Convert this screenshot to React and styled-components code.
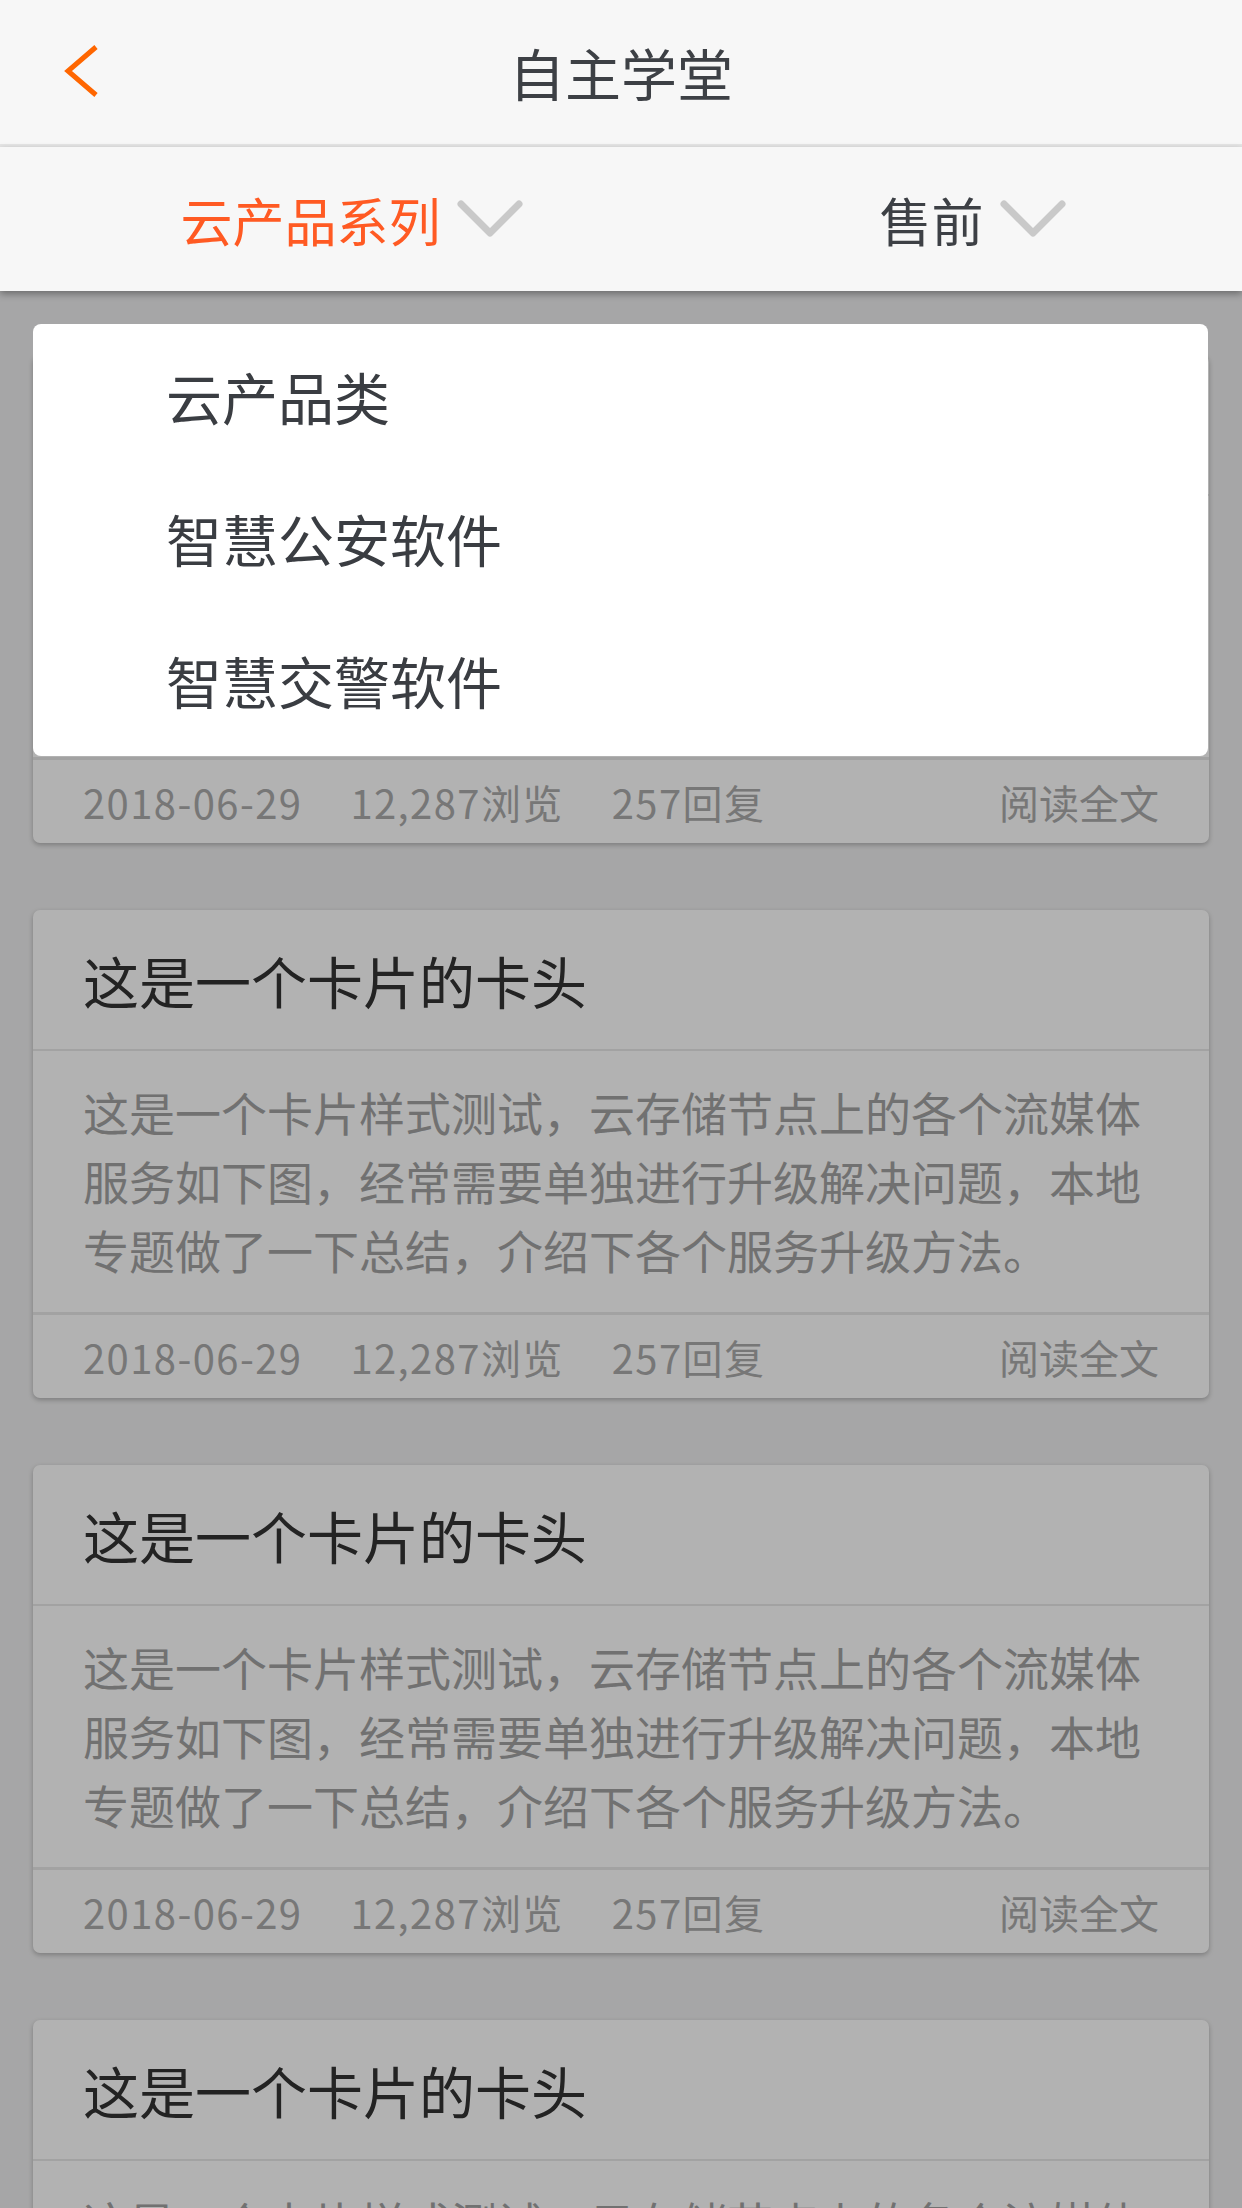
import React from 'react'
import styled, { createGlobalStyle } from 'styled-components'

const GlobalStyle = createGlobalStyle`
    body {
        margin: 0;
        background: #eeeeef;
        font-family: "Noto Sans CJK SC", "Noto Sans", sans-serif;
    }
`

const Page = styled.div`
    width: 1242px;
    min-height: 2208px;
    background: #eeeeef;
`

const Header = styled.header`
    display: grid;
    grid-template-columns: 1fr auto 1fr;
    align-items: center;
    height: 144px;
    background: #f7f7f7;
    border-bottom: 3px solid #e6e6e6;
`

const BackButton = styled.button`
    justify-self: start;
    display: flex;
    align-items: center;
    margin-left: 64px;
    padding: 0;
    border: none;
    background: none;
`

const Title = styled.h1`
    margin: 0 0 2px;
    font-size: 56px;
    font-weight: 400;
    color: #3d4045;
`

const TabBar = styled.nav`
    position: relative;
    z-index: 3;
    display: grid;
    grid-template-columns: 1fr 1fr;
    height: 144px;
    background: #f7f7f7;
    box-shadow: 0 3px 7px rgba(0, 0, 0, 0.35);
`

const Tab = styled.div`
    display: flex;
    align-items: center;
    justify-content: center;
    font-size: 52px;
    color: ${p => (p.active ? '#ff5a23' : '#3d4045')};
`

const Chevron = styled.svg`
    margin-left: 16px;
    margin-right: -82px;
    flex: none;
`

const Main = styled.main`
    position: relative;
`

const CardList = styled.div`
    display: flex;
    flex-direction: column;
    gap: 67px;
    padding: 64px 33px 64px 33px;
`

const Card = styled.article`
    background: #fff;
    border-radius: 7px;
    box-shadow: 0 2px 5px rgba(0, 0, 0, 0.25);
    overflow: hidden;
`

const CardHead = styled.div`
    display: flex;
    align-items: center;
    height: 139px;
    padding: 0 50px;
    font-size: 56px;
    color: #333;
    border-bottom: 2px solid #e8e8e8;
`

const CardBody = styled.div`
    padding: 26px 50px 28px;
    font-size: 46px;
    line-height: 69px;
    color: #a3a3a3;
    border-bottom: 3px solid #e8e8e8;
`

const CardFoot = styled.div`
    display: flex;
    align-items: center;
    height: 83px;
    padding: 0 50px;
    font-size: 40px;
    color: #ababab;
`

const Meta = styled.span`
    margin-right: 48px;
    letter-spacing: 1.4px;
`

const ReadMore = styled.span`
    margin-left: auto;
`

const Mask = styled.div`
    position: absolute;
    inset: 0;
    z-index: 1;
    background: rgba(0, 0, 0, 0.3);
`

const Dropdown = styled.ul`
    position: absolute;
    z-index: 2;
    top: 33px;
    left: 33px;
    right: 34px;
    margin: 0;
    padding: 0 0 6px;
    list-style: none;
    background: #fff;
    border-radius: 8px;
`

const DropItem = styled.li`
    display: flex;
    align-items: center;
    height: 142px;
    padding-left: 133px;
    font-size: 56px;
    color: #3a3d42;
`

const body = '这是一个卡片样式测试，云存储节点上的各个流媒体服务如下图，经常需要单独进行升级解决问题，本地专题做了一下总结，介绍下各个服务升级方法。'

function DownArrow() {
    return (
        <Chevron width="66" height="38" viewBox="0 0 66 38">
            <polyline points="4,4 33,33 62,4" fill="none" stroke="#c9c9c9" strokeWidth="7" strokeLinecap="round" strokeLinejoin="round" />
        </Chevron>
    )
}

export default function App() {
    const cards = [1, 2, 3, 4]
    return (
        <Page>
            <GlobalStyle />
            <Header>
                <BackButton>
                    <svg width="36" height="56" viewBox="0 0 36 56">
                        <polyline points="32,3 4,27 32,51" fill="none" stroke="#ff6600" strokeWidth="5" />
                    </svg>
                </BackButton>
                <Title>自主学堂</Title>
            </Header>
            <TabBar>
                <Tab active>
                    <span>云产品系列</span>
                    <DownArrow />
                </Tab>
                <Tab>
                    <span>售前</span>
                    <DownArrow />
                </Tab>
            </TabBar>
            <Main>
                <CardList>
                    {cards.map(id => (
                        <Card key={id}>
                            <CardHead>这是一个卡片的卡头</CardHead>
                            <CardBody>{body}</CardBody>
                            <CardFoot>
                                <Meta>2018-06-29</Meta>
                                <Meta>12,287浏览</Meta>
                                <Meta>257回复</Meta>
                                <ReadMore>阅读全文</ReadMore>
                            </CardFoot>
                        </Card>
                    ))}
                </CardList>
                <Mask />
                <Dropdown>
                    <DropItem>云产品类</DropItem>
                    <DropItem>智慧公安软件</DropItem>
                    <DropItem>智慧交警软件</DropItem>
                </Dropdown>
            </Main>
        </Page>
    )
}
